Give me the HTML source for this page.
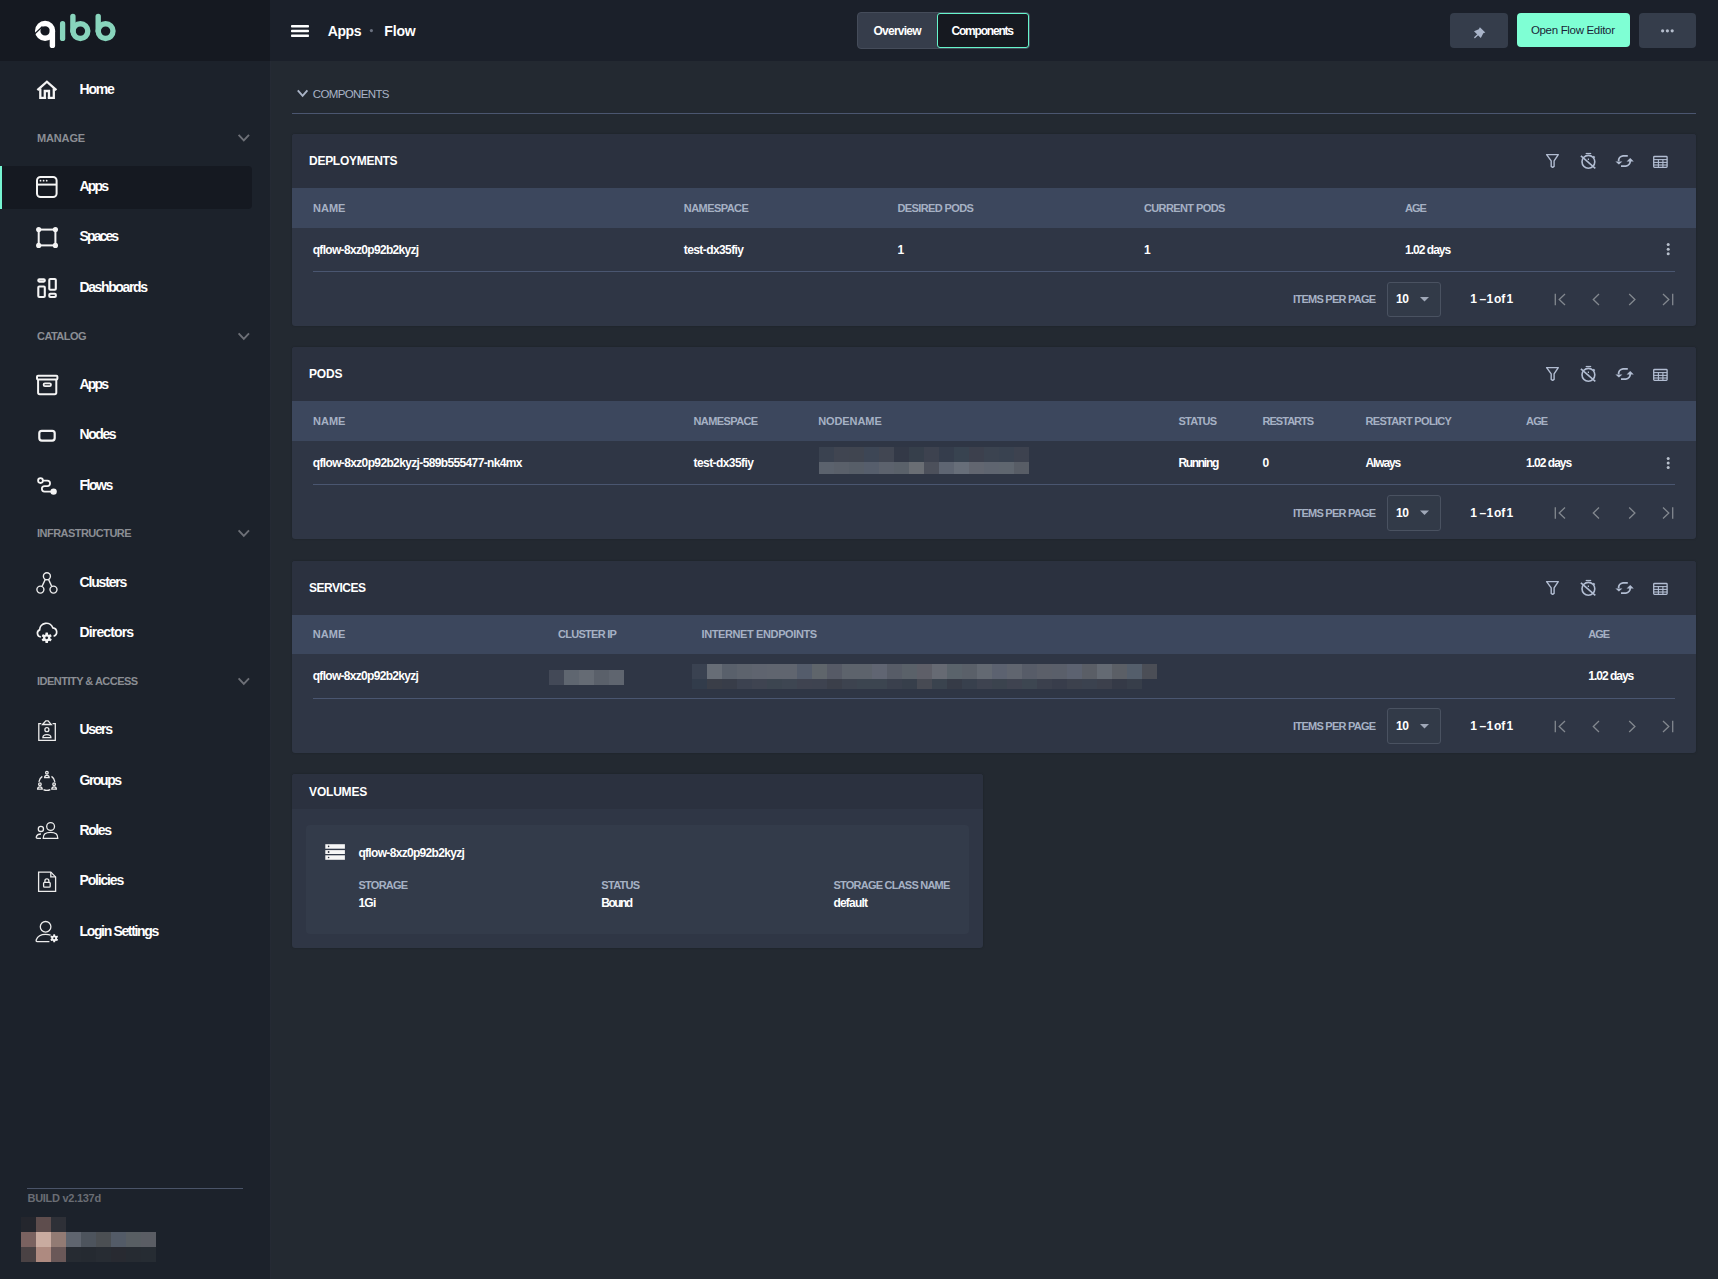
<!DOCTYPE html>
<html><head><meta charset="utf-8">
<style>
html,body{margin:0;padding:0;}
body{width:1718px;height:1279px;overflow:hidden;position:relative;background:#232931;font-family:"Liberation Sans",sans-serif;}
.a{position:absolute;}
.t{position:absolute;white-space:nowrap;line-height:20px;font-family:"Liberation Sans",sans-serif;}
.b{position:absolute;}
svg{position:absolute;left:0;top:0;overflow:visible;}
.card{position:absolute;left:292px;width:1404px;background:#2f3645;border-radius:3px;overflow:hidden;box-shadow:0 0 2px rgba(0,0,0,0.25);}
.card .ttl{position:absolute;left:0;top:0;right:0;height:54px;background:#2b313f;}
.card .hdr{position:absolute;left:0;top:54px;right:0;height:40px;background:#3c475d;}
.card .div{position:absolute;left:21px;width:1362px;top:137px;height:1px;background:#4a5670;}
.sel{position:absolute;left:1387px;width:54px;height:35.5px;border:1px solid #4a5261;border-radius:3px;background:#323a48;box-sizing:border-box;}
</style></head><body>

<!-- sidebar -->
<div class="a" style="left:0;top:0;width:270px;height:1279px;background:#1c222b;"></div>
<div class="a" style="left:270px;top:61px;width:1px;height:1218px;background:#252a34;"></div>
<div class="a" style="left:0;top:0;width:270px;height:61px;background:#151921;"></div>
<!-- header -->
<div class="a" style="left:270px;top:0;width:1448px;height:61px;background:#1b202a;"></div>

<!-- active item -->
<div class="a" style="left:0;top:166px;width:252px;height:43px;background:#151921;border-radius:0 4px 4px 0;"></div>
<div class="a" style="left:0;top:166px;width:2px;height:43px;background:#76f5d2;"></div>

<!-- build line -->
<div class="a" style="left:27px;top:1188px;width:216px;height:1px;background:#4a5468;"></div>

<!-- tabs -->
<div class="a" style="left:857px;top:12px;width:173px;height:37px;background:#363d4b;border:1px solid #454c5a;border-radius:4px;box-sizing:border-box;"></div>
<div class="a" style="left:936.7px;top:13px;width:92.3px;height:35px;background:#161920;border:1.7px solid #66f5cc;border-radius:3px;box-sizing:border-box;"></div>

<!-- buttons -->
<div class="a" style="left:1450px;top:13px;width:58px;height:34.5px;background:#353d4b;border-radius:4px;"></div>
<div class="a" style="left:1517px;top:13px;width:113px;height:34px;background:#7fffd4;border-radius:4px;"></div>
<div class="a" style="left:1639px;top:13px;width:57px;height:34.5px;background:#353d4b;border-radius:4px;"></div>

<!-- components line -->
<div class="a" style="left:292px;top:113px;width:1404px;height:1px;background:#4b5670;"></div>

<!-- cards -->
<div class="card" style="top:134px;height:192px;"><div class="ttl"></div><div class="hdr"></div><div class="div"></div></div>
<div class="card" style="top:347px;height:192px;"><div class="ttl"></div><div class="hdr"></div><div class="div"></div></div>
<div class="card" style="top:561px;height:192px;"><div class="ttl"></div><div class="hdr" style="height:39px"></div><div class="div"></div></div>
<div class="card" style="top:774px;height:174px;width:691px;"><div class="ttl" style="height:35px;"></div>
  <div class="a" style="left:14px;top:51px;width:663px;height:109px;background:#333b4a;border-radius:4px;"></div>
</div>

<div class="sel" style="top:281.5px;"></div>
<div class="sel" style="top:495px;"></div>
<div class="sel" style="top:708px;"></div>
<div class="b" style="left:21px;top:1217px;width:15px;height:15px;background:#24262d"></div><div class="b" style="left:36px;top:1217px;width:15px;height:15px;background:#5e4d4d"></div><div class="b" style="left:51px;top:1217px;width:15px;height:15px;background:#2e3037"></div><div class="b" style="left:21px;top:1232px;width:15px;height:15px;background:#7a6260"></div><div class="b" style="left:36px;top:1232px;width:15px;height:15px;background:#c9aba0"></div><div class="b" style="left:51px;top:1232px;width:15px;height:15px;background:#927b74"></div><div class="b" style="left:66px;top:1232px;width:15px;height:15px;background:#5f656f"></div><div class="b" style="left:81px;top:1232px;width:15px;height:15px;background:#4d545d"></div><div class="b" style="left:96px;top:1232px;width:15px;height:15px;background:#4b4f53"></div><div class="b" style="left:111px;top:1232px;width:15px;height:15px;background:#535b67"></div><div class="b" style="left:126px;top:1232px;width:15px;height:15px;background:#585e63"></div><div class="b" style="left:141px;top:1232px;width:15px;height:15px;background:#5a5d64"></div><div class="b" style="left:21px;top:1247px;width:15px;height:15px;background:#4a4244"></div><div class="b" style="left:36px;top:1247px;width:15px;height:15px;background:#ae8a80"></div><div class="b" style="left:51px;top:1247px;width:15px;height:15px;background:#6a5858"></div><div class="b" style="left:66px;top:1247px;width:15px;height:15px;background:#262b32"></div><div class="b" style="left:81px;top:1247px;width:15px;height:15px;background:#252a31"></div><div class="b" style="left:96px;top:1247px;width:15px;height:15px;background:#272c33"></div><div class="b" style="left:111px;top:1247px;width:15px;height:15px;background:#282a31"></div><div class="b" style="left:126px;top:1247px;width:15px;height:15px;background:#262b32"></div><div class="b" style="left:141px;top:1247px;width:15px;height:15px;background:#262c33"></div>
<div class="b" style="left:819px;top:447px;width:15px;height:15px;background:#3a4250"></div><div class="b" style="left:834px;top:447px;width:15px;height:15px;background:#404551"></div><div class="b" style="left:849px;top:447px;width:15px;height:15px;background:#404550"></div><div class="b" style="left:864px;top:447px;width:15px;height:15px;background:#3d4655"></div><div class="b" style="left:879px;top:447px;width:15px;height:15px;background:#414652"></div><div class="b" style="left:894px;top:447px;width:15px;height:15px;background:#333947"></div><div class="b" style="left:909px;top:447px;width:15px;height:15px;background:#363f4b"></div><div class="b" style="left:924px;top:447px;width:15px;height:15px;background:#3d424f"></div><div class="b" style="left:939px;top:447px;width:15px;height:15px;background:#353d4c"></div><div class="b" style="left:954px;top:447px;width:15px;height:15px;background:#384350"></div><div class="b" style="left:969px;top:447px;width:15px;height:15px;background:#3c404d"></div><div class="b" style="left:984px;top:447px;width:15px;height:15px;background:#3b4350"></div><div class="b" style="left:999px;top:447px;width:15px;height:15px;background:#394250"></div><div class="b" style="left:1014px;top:447px;width:15px;height:15px;background:#3d424f"></div><div class="b" style="left:819px;top:462px;width:15px;height:12px;background:#5b626d"></div><div class="b" style="left:834px;top:462px;width:15px;height:12px;background:#5a606a"></div><div class="b" style="left:849px;top:462px;width:15px;height:12px;background:#575e68"></div><div class="b" style="left:864px;top:462px;width:15px;height:12px;background:#565e6c"></div><div class="b" style="left:879px;top:462px;width:15px;height:12px;background:#5c626d"></div><div class="b" style="left:894px;top:462px;width:15px;height:12px;background:#5a616a"></div><div class="b" style="left:909px;top:462px;width:15px;height:12px;background:#6a6e74"></div><div class="b" style="left:924px;top:462px;width:15px;height:12px;background:#4c505b"></div><div class="b" style="left:939px;top:462px;width:15px;height:12px;background:#5e6572"></div><div class="b" style="left:954px;top:462px;width:15px;height:12px;background:#676e79"></div><div class="b" style="left:969px;top:462px;width:15px;height:12px;background:#626670"></div><div class="b" style="left:984px;top:462px;width:15px;height:12px;background:#5f6570"></div><div class="b" style="left:999px;top:462px;width:15px;height:12px;background:#5f666f"></div><div class="b" style="left:1014px;top:462px;width:15px;height:12px;background:#585d66"></div>
<div class="b" style="left:549px;top:670px;width:15px;height:15px;background:#434957"></div><div class="b" style="left:564px;top:670px;width:15px;height:15px;background:#5f6670"></div><div class="b" style="left:579px;top:670px;width:15px;height:15px;background:#656b74"></div><div class="b" style="left:594px;top:670px;width:15px;height:15px;background:#5a606a"></div><div class="b" style="left:609px;top:670px;width:15px;height:15px;background:#5f656f"></div>
<div class="b" style="left:692px;top:664px;width:15px;height:15px;background:#3a4251"></div><div class="b" style="left:707px;top:664px;width:15px;height:15px;background:#676d76"></div><div class="b" style="left:722px;top:664px;width:15px;height:15px;background:#59606b"></div><div class="b" style="left:737px;top:664px;width:15px;height:15px;background:#5d636d"></div><div class="b" style="left:752px;top:664px;width:15px;height:15px;background:#5f646f"></div><div class="b" style="left:767px;top:664px;width:15px;height:15px;background:#60656f"></div><div class="b" style="left:782px;top:664px;width:15px;height:15px;background:#60656f"></div><div class="b" style="left:797px;top:664px;width:15px;height:15px;background:#545c6b"></div><div class="b" style="left:812px;top:664px;width:15px;height:15px;background:#5f656b"></div><div class="b" style="left:827px;top:664px;width:15px;height:15px;background:#565a66"></div><div class="b" style="left:842px;top:664px;width:15px;height:15px;background:#5d636c"></div><div class="b" style="left:857px;top:664px;width:15px;height:15px;background:#5d636c"></div><div class="b" style="left:872px;top:664px;width:15px;height:15px;background:#606572"></div><div class="b" style="left:887px;top:664px;width:15px;height:15px;background:#575c67"></div><div class="b" style="left:902px;top:664px;width:15px;height:15px;background:#5a6169"></div><div class="b" style="left:917px;top:664px;width:15px;height:15px;background:#5e5f68"></div><div class="b" style="left:932px;top:664px;width:15px;height:15px;background:#666a73"></div><div class="b" style="left:947px;top:664px;width:15px;height:15px;background:#5a636b"></div><div class="b" style="left:962px;top:664px;width:15px;height:15px;background:#5a6069"></div><div class="b" style="left:977px;top:664px;width:15px;height:15px;background:#636972"></div><div class="b" style="left:992px;top:664px;width:15px;height:15px;background:#5c6270"></div><div class="b" style="left:1007px;top:664px;width:15px;height:15px;background:#60656f"></div><div class="b" style="left:1022px;top:664px;width:15px;height:15px;background:#575c68"></div><div class="b" style="left:1037px;top:664px;width:15px;height:15px;background:#5b5f69"></div><div class="b" style="left:1052px;top:664px;width:15px;height:15px;background:#5a5f6a"></div><div class="b" style="left:1067px;top:664px;width:15px;height:15px;background:#5c6270"></div><div class="b" style="left:1082px;top:664px;width:15px;height:15px;background:#5a5e66"></div><div class="b" style="left:1097px;top:664px;width:15px;height:15px;background:#646a73"></div><div class="b" style="left:1112px;top:664px;width:15px;height:15px;background:#5b5f66"></div><div class="b" style="left:1127px;top:664px;width:15px;height:15px;background:#545e6b"></div><div class="b" style="left:1142px;top:664px;width:15px;height:15px;background:#4b4e56"></div><div class="b" style="left:692px;top:679px;width:15px;height:10px;background:#323c4b"></div><div class="b" style="left:707px;top:679px;width:15px;height:10px;background:#3a3e48"></div><div class="b" style="left:722px;top:679px;width:15px;height:10px;background:#383d49"></div><div class="b" style="left:737px;top:679px;width:15px;height:10px;background:#3c4250"></div><div class="b" style="left:752px;top:679px;width:15px;height:10px;background:#3f4451"></div><div class="b" style="left:767px;top:679px;width:15px;height:10px;background:#3c4550"></div><div class="b" style="left:782px;top:679px;width:15px;height:10px;background:#3e4652"></div><div class="b" style="left:797px;top:679px;width:15px;height:10px;background:#3f4350"></div><div class="b" style="left:812px;top:679px;width:15px;height:10px;background:#3e4350"></div><div class="b" style="left:827px;top:679px;width:15px;height:10px;background:#3b3f4a"></div><div class="b" style="left:842px;top:679px;width:15px;height:10px;background:#3d434f"></div><div class="b" style="left:857px;top:679px;width:15px;height:10px;background:#3c4550"></div><div class="b" style="left:872px;top:679px;width:15px;height:10px;background:#3c4550"></div><div class="b" style="left:887px;top:679px;width:15px;height:10px;background:#3a404d"></div><div class="b" style="left:902px;top:679px;width:15px;height:10px;background:#373f4b"></div><div class="b" style="left:917px;top:679px;width:15px;height:10px;background:#474a53"></div><div class="b" style="left:932px;top:679px;width:15px;height:10px;background:#3a434e"></div><div class="b" style="left:947px;top:679px;width:15px;height:10px;background:#363b47"></div><div class="b" style="left:962px;top:679px;width:15px;height:10px;background:#38404d"></div><div class="b" style="left:977px;top:679px;width:15px;height:10px;background:#3e4350"></div><div class="b" style="left:992px;top:679px;width:15px;height:10px;background:#3b434e"></div><div class="b" style="left:1007px;top:679px;width:15px;height:10px;background:#3f4350"></div><div class="b" style="left:1022px;top:679px;width:15px;height:10px;background:#3d4651"></div><div class="b" style="left:1037px;top:679px;width:15px;height:10px;background:#3b404d"></div><div class="b" style="left:1052px;top:679px;width:15px;height:10px;background:#383d4b"></div><div class="b" style="left:1067px;top:679px;width:15px;height:10px;background:#3c414d"></div><div class="b" style="left:1082px;top:679px;width:15px;height:10px;background:#3b424f"></div><div class="b" style="left:1097px;top:679px;width:15px;height:10px;background:#3c404c"></div><div class="b" style="left:1112px;top:679px;width:15px;height:10px;background:#353a47"></div><div class="b" style="left:1127px;top:679px;width:15px;height:10px;background:#373e4a"></div>

<svg width="1718" height="1279" viewBox="0 0 1718 1279">
<!-- logo -->
<g fill="none" stroke-linecap="round">
  <circle cx="45.1" cy="30.9" r="7.4" stroke="#ffffff" stroke-width="5.4"/>
  <line x1="52.4" y1="31" x2="52.4" y2="45.4" stroke="#ffffff" stroke-width="5.4"/>
  <line x1="34.3" y1="34.2" x2="42.5" y2="26.5" stroke="#151921" stroke-width="1.2" stroke-linecap="butt"/>
  <line x1="62.6" y1="23.7" x2="62.6" y2="38.4" stroke="#88d4bc" stroke-width="5.3"/>
  <line x1="72.9" y1="16.4" x2="72.9" y2="31" stroke="#88d4bc" stroke-width="5.4"/>
  <circle cx="80.4" cy="31.1" r="7.4" stroke="#88d4bc" stroke-width="5.4"/>
  <line x1="98.2" y1="16.4" x2="98.2" y2="31" stroke="#88d4bc" stroke-width="5.4"/>
  <circle cx="105.6" cy="31.1" r="7.4" stroke="#88d4bc" stroke-width="5.4"/>
</g>

<!-- hamburger -->
<g fill="#ffffff">
  <rect x="291" y="25" width="18" height="2.6" rx="0.8"/>
  <rect x="291" y="29.7" width="18" height="2.6" rx="0.8"/>
  <rect x="291" y="34.4" width="18" height="2.6" rx="0.8"/>
</g>
<circle cx="371.4" cy="30.6" r="1.6" fill="#6b7180"/>

<!-- pin -->
<g fill="#a9b4c9">
  <polygon points="1479.9,27.2 1485.3,32.5 1483.3,33.2 1480.8,38 1474,31.3 1478.8,29.2"/>
  <line x1="1474.8" y1="37.6" x2="1478" y2="34.4" stroke="#a9b4c9" stroke-width="1.4" stroke-linecap="round"/>
</g>
<!-- more dots -->
<g fill="#b5bdcc">
  <circle cx="1662.6" cy="30.8" r="1.6"/><circle cx="1667.4" cy="30.8" r="1.6"/><circle cx="1672.2" cy="30.8" r="1.6"/>
</g>

<!-- components chevron -->
<polyline points="297.8,90.3 302.6,95.8 307.4,90.3" fill="none" stroke="#a9b3c6" stroke-width="1.9"/>

<!-- sidebar chevrons -->
<g fill="none" stroke="#6d7077" stroke-width="1.9">
  <polyline points="238.6,134.9 243.8,140.4 249,134.9"/>
  <polyline points="238.6,333.4 243.8,338.9 249,333.4"/>
  <polyline points="238.6,530.4 243.8,535.9 249,530.4"/>
  <polyline points="238.6,678.4 243.8,683.9 249,678.4"/>
</g>

<!-- sidebar icons -->
<g fill="none" stroke="#f4f4f4" stroke-width="2.3" stroke-linejoin="miter">
  <!-- home -->
  <polyline points="37.4,90.2 46.9,81.7 56.4,90.2"/>
  <polyline points="40.3,88.6 40.3,97.9 46.1,97.9"/>
  <polyline points="53.8,88.6 53.8,97.9 47.8,97.9"/>
  <polyline points="44.8,97.9 44.8,91 49,91 49,97.9"/>
</g>
<g fill="none" stroke="#f4f4f4" stroke-width="2">
  <!-- apps -->
  <rect x="37" y="177" width="19.6" height="20" rx="3.5"/>
  <line x1="37" y1="184.6" x2="56.6" y2="184.6"/>
</g>
<g fill="#f4f4f4"><circle cx="40.5" cy="180.7" r="0.9"/><circle cx="43.6" cy="180.7" r="0.9"/><circle cx="46.7" cy="180.7" r="0.9"/></g>
<!-- spaces -->
<g fill="none" stroke="#f4f4f4" stroke-width="2"><rect x="38.7" y="229.6" width="16.7" height="15.8"/></g>
<g fill="#f4f4f4"><circle cx="38.7" cy="229.6" r="2.6"/><circle cx="55.4" cy="229.6" r="2.6"/><circle cx="38.7" cy="245.4" r="2.6"/><circle cx="55.4" cy="245.4" r="2.6"/></g>
<!-- dashboards -->
<g fill="none" stroke="#f4f4f4" stroke-width="2.1">
  <rect x="38.3" y="279.3" width="6.5" height="2.3" rx="1"/>
  <rect x="38.3" y="286.5" width="6.5" height="10.5" rx="1"/>
  <rect x="49.3" y="279" width="6.5" height="10.8" rx="1"/>
  <rect x="49.3" y="293.7" width="6.5" height="3.3" rx="1"/>
</g>
<!-- catalog apps (archive) -->
<g fill="none" stroke="#f4f4f4" stroke-width="2">
  <rect x="37" y="375.8" width="20.4" height="3.8" rx="1"/>
  <path d="M38.1 379.6 V392.6 a1.6 1.6 0 0 0 1.6 1.6 H54.7 a1.6 1.6 0 0 0 1.6 -1.6 V379.6"/>
  <rect x="43.6" y="383.4" width="7.4" height="2.8" rx="1.4" stroke-width="1.8"/>
</g>
<!-- nodes -->
<rect x="39.3" y="430.8" width="15.4" height="9.8" rx="2.5" fill="none" stroke="#f4f4f4" stroke-width="2.2"/>
<!-- flows -->
<g fill="none" stroke="#f4f4f4" stroke-width="1.8">
  <circle cx="40.5" cy="480.6" r="2.4"/>
  <path d="M43 480.6 H47.3 A2.75 2.75 0 0 1 47.3 486.1 H44.6 A2.75 2.75 0 0 0 44.6 491.6 H51"/>
</g>
<circle cx="53.6" cy="491.6" r="3.2" fill="#f4f4f4"/>
<!-- clusters -->
<g fill="none" stroke="#ececec" stroke-width="1.4">
  <circle cx="46.9" cy="576.2" r="3.5"/>
  <circle cx="40.4" cy="589.6" r="3.5"/>
  <circle cx="53.5" cy="589.6" r="3.5"/>
  <line x1="45.3" y1="579.4" x2="42.1" y2="586.3"/>
  <line x1="48.5" y1="579.4" x2="51.7" y2="586.3"/>
</g>
<!-- directors -->
<g fill="none" stroke="#f4f4f4" stroke-width="1.7">
  <path d="M40.8 636.8 A3.6 3.6 0 0 1 39.6 629.9 A6.8 6.8 0 0 1 52.8 627.8 A4.3 4.3 0 0 1 53.6 636.2"/>
</g>
<g fill="#f4f4f4">
  <circle cx="46.7" cy="637.8" r="3.6"/>
  <rect x="45.4" y="632.6" width="2.6" height="10.4" rx="0.5"/>
  <rect x="45.4" y="632.6" width="2.6" height="10.4" rx="0.5" transform="rotate(60 46.7 637.8)"/>
  <rect x="45.4" y="632.6" width="2.6" height="10.4" rx="0.5" transform="rotate(-60 46.7 637.8)"/>
</g>
<circle cx="46.7" cy="637.8" r="1.4" fill="#1c222b"/>
<!-- users -->
<g fill="none" stroke="#ececec" stroke-width="1.3">
  <path d="M41.3 723.6 H38.8 V740.3 H55.3 V723.6 H52.6"/>
  <path d="M42.6 724.5 L45.8 720.8 H48.1 L51.3 724.5 Z"/>
  <circle cx="46.9" cy="729.7" r="2"/>
  <path d="M42.9 737.6 Q42.9 734.6 46.9 734.6 Q50.9 734.6 50.9 737.6 Z"/>
</g>
<!-- groups -->
<g fill="none" stroke="#ececec" stroke-width="1.3">
  <path d="M42.3 776.4 A7.8 7.8 0 0 0 38.9 781.9" />
  <path d="M51.5 776.4 A7.8 7.8 0 0 1 54.9 781.9" />
  <path d="M43.5 789.6 A7.8 7.8 0 0 0 50.3 789.6" />
  <circle cx="46.9" cy="772.7" r="1.3"/>
  <path d="M44.6 777.7 Q44.6 775.3 46.9 775.3 Q49.2 775.3 49.2 777.7 Z"/>
  <circle cx="39.9" cy="784.2" r="1.3"/>
  <path d="M37.6 789.2 Q37.6 786.8 39.9 786.8 Q42.2 786.8 42.2 789.2 Z"/>
  <circle cx="54.1" cy="784.2" r="1.3"/>
  <path d="M51.8 789.2 Q51.8 786.8 54.1 786.8 Q56.4 786.8 56.4 789.2 Z"/>
</g>
<!-- roles -->
<g fill="none" stroke="#ececec" stroke-width="1.3">
  <circle cx="50.6" cy="826.5" r="3.9"/>
  <circle cx="40.9" cy="828.9" r="2.6"/>
  <path d="M43.2 838.4 Q43 832.3 50.6 832.3 Q58 832.3 57.8 838.4 Z"/>
  <path d="M41 838.4 H37.6 Q35.8 838.4 36.4 836.6 Q37.4 833.9 41 834"/>
</g>
<!-- policies -->
<g fill="none" stroke="#ececec" stroke-width="1.3">
  <path d="M38.6 872.1 H50.8 L55.6 876.9 V891.3 H38.6 Z"/>
  <path d="M50.8 872.1 V876.9 H55.6"/>
  <rect x="43.6" y="882.3" width="6.6" height="4.9" rx="1"/>
  <path d="M44.9 882.3 V880.9 A2 2 0 0 1 48.9 880.9 V882.3"/>
</g>
<!-- login settings -->
<g fill="none" stroke="#ececec" stroke-width="1.3">
  <circle cx="45.6" cy="926.8" r="5.3"/>
  <path d="M49.4 941.6 H37.2 Q35.7 941.6 36.3 939.8 Q38.3 934.4 45.6 934.4 Q48.6 934.4 50.6 935.1"/>
</g>
<g fill="#f4f4f4">
  <circle cx="54.2" cy="938.3" r="2.8"/>
  <rect x="53.2" y="934.3" width="2" height="8" rx="0.4"/>
  <rect x="53.2" y="934.3" width="2" height="8" rx="0.4" transform="rotate(60 54.2 938.3)"/>
  <rect x="53.2" y="934.3" width="2" height="8" rx="0.4" transform="rotate(-60 54.2 938.3)"/>
</g>
<circle cx="54.2" cy="938.3" r="1" fill="#1c222b"/>

<!-- card icons -->
<g id="cicons" fill="none" stroke="#b2bdd2" stroke-width="1.4">
  <path d="M1546.6 154.6 H1558.3 L1554.1 160.9 V166.4 L1552.65 167.4 L1551.2 166.4 V160.9 Z" stroke-linejoin="round"/>
  <circle cx="1588.4" cy="161.8" r="6.4" stroke-width="1.6"/>
  <line x1="1585.7" y1="153.5" x2="1591.2" y2="153.5" stroke-width="1.2"/>
  <line x1="1580.9" y1="155.9" x2="1595.3" y2="168.4" stroke-width="1.6"/>
  <line x1="1593.2" y1="156.2" x2="1594.8" y2="157.6" stroke-width="1.4"/>
  <line x1="1588.4" y1="158.6" x2="1588.4" y2="160" stroke-width="1.2"/>
  <path d="M1627.8 155.8 H1623 A5 5 0 0 0 1618.6 161.2" stroke-width="1.8"/>
  <polygon points="1615.4,161.5 1622.4,161.5 1618.9,164.6" fill="#b2bdd2" stroke="none"/>
  <path d="M1621 166.1 H1625.8 A5 5 0 0 0 1630.2 160.7" stroke-width="1.8"/>
  <polygon points="1626.6,161.5 1633.8,161.5 1630.2,157.9" fill="#b2bdd2" stroke="none"/>
  <rect x="1653.7" y="156.5" width="13.4" height="10.8" rx="0.8" stroke-width="1.3"/>
  <line x1="1653.7" y1="159.6" x2="1667.1" y2="159.6" stroke-width="1.1"/>
  <line x1="1653.7" y1="162.4" x2="1667.1" y2="162.4" stroke-width="1.1"/>
  <line x1="1653.7" y1="165" x2="1667.1" y2="165" stroke-width="1.1"/>
  <line x1="1658.4" y1="159.6" x2="1658.4" y2="167.3" stroke-width="1.1"/>
  <line x1="1662.9" y1="159.6" x2="1662.9" y2="167.3" stroke-width="1.1"/>
</g>
<use href="#cicons" transform="translate(0 213)"/>
<use href="#cicons" transform="translate(0 427)"/>

<!-- kebab + pagination -->
<g id="keb" fill="#b8c0cc"><circle cx="1668.2" cy="244.6" r="1.5"/><circle cx="1668.2" cy="249.2" r="1.5"/><circle cx="1668.2" cy="253.8" r="1.5"/></g>
<use href="#keb" transform="translate(0 213.8)"/>
<g id="pag">
  <polygon points="1420,297 1429,297 1424.5,301.5" fill="#a0a8b8"/>
  <g fill="none" stroke="#83888f" stroke-width="1.3">
    <line x1="1555.3" y1="293.8" x2="1555.3" y2="305.2"/>
    <polyline points="1565,294 1559.2,299.5 1565,305"/>
    <polyline points="1599,294 1593.3,299.5 1599,305"/>
    <polyline points="1629.2,294 1634.9,299.5 1629.2,305"/>
    <polyline points="1663,294 1668.8,299.5 1663,305"/>
    <line x1="1672.7" y1="293.8" x2="1672.7" y2="305.2"/>
  </g>
</g>
<use href="#pag" transform="translate(0 213.5)"/>
<use href="#pag" transform="translate(0 427)"/>
<!-- storage icon -->
<g fill="#f6f6f6">
  <rect x="325.3" y="844.2" width="19.6" height="4.5"/>
  <rect x="325.3" y="850.1" width="19.6" height="3.9"/>
  <rect x="325.3" y="855.3" width="19.6" height="4.5"/>
</g>
<g fill="#2b303c"><circle cx="328.6" cy="846.4" r="0.8"/><circle cx="328.6" cy="852" r="0.9"/><circle cx="328.6" cy="857.5" r="0.8"/></g>
</svg>

<div class="t" style="left:79.5px;top:79px;font-size:14px;font-weight:700;color:#ffffff;letter-spacing:-1.222px;">Home</div>
<div class="t" style="left:79.5px;top:176px;font-size:14px;font-weight:700;color:#ffffff;letter-spacing:-1.820px;">Apps</div>
<div class="t" style="left:79.5px;top:226px;font-size:14px;font-weight:700;color:#ffffff;letter-spacing:-1.881px;">Spaces</div>
<div class="t" style="left:79.5px;top:277px;font-size:14px;font-weight:700;color:#ffffff;letter-spacing:-1.387px;">Dashboards</div>
<div class="t" style="left:79.5px;top:374px;font-size:14px;font-weight:700;color:#ffffff;letter-spacing:-1.820px;">Apps</div>
<div class="t" style="left:79.5px;top:424px;font-size:14px;font-weight:700;color:#ffffff;letter-spacing:-1.439px;">Nodes</div>
<div class="t" style="left:79.5px;top:475px;font-size:14px;font-weight:700;color:#ffffff;letter-spacing:-1.458px;">Flows</div>
<div class="t" style="left:79.5px;top:572px;font-size:14px;font-weight:700;color:#ffffff;letter-spacing:-1.170px;">Clusters</div>
<div class="t" style="left:79.5px;top:622px;font-size:14px;font-weight:700;color:#ffffff;letter-spacing:-0.854px;">Directors</div>
<div class="t" style="left:79.5px;top:719px;font-size:14px;font-weight:700;color:#ffffff;letter-spacing:-1.370px;">Users</div>
<div class="t" style="left:79.5px;top:770px;font-size:14px;font-weight:700;color:#ffffff;letter-spacing:-1.428px;">Groups</div>
<div class="t" style="left:79.5px;top:820px;font-size:14px;font-weight:700;color:#ffffff;letter-spacing:-1.421px;">Roles</div>
<div class="t" style="left:79.5px;top:870px;font-size:14px;font-weight:700;color:#ffffff;letter-spacing:-1.169px;">Policies</div>
<div class="t" style="left:79.5px;top:921px;font-size:14px;font-weight:700;color:#ffffff;letter-spacing:-1.345px;">Login Settings</div>
<div class="t" style="left:37.0px;top:128px;font-size:11px;font-weight:700;color:#8b8e94;letter-spacing:-0.146px;">MANAGE</div>
<div class="t" style="left:37.0px;top:326px;font-size:11px;font-weight:700;color:#8b8e94;letter-spacing:-0.548px;">CATALOG</div>
<div class="t" style="left:37.0px;top:523px;font-size:11px;font-weight:700;color:#8b8e94;letter-spacing:-0.530px;">INFRASTRUCTURE</div>
<div class="t" style="left:37.0px;top:671px;font-size:11px;font-weight:700;color:#8b8e94;letter-spacing:-0.515px;">IDENTITY &amp; ACCESS</div>
<div class="t" style="left:27.5px;top:1188px;font-size:11px;font-weight:700;color:#6a6d74;letter-spacing:-0.281px;">BUILD v2.137d</div>
<div class="t" style="left:327.7px;top:21px;font-size:14px;font-weight:700;color:#ffffff;letter-spacing:-0.387px;">Apps</div>
<div class="t" style="left:384.3px;top:21px;font-size:14px;font-weight:700;color:#ffffff;letter-spacing:-0.150px;">Flow</div>
<div class="t" style="left:873.5px;top:21px;font-size:12px;font-weight:700;color:#ffffff;letter-spacing:-0.765px;">Overview</div>
<div class="t" style="left:951.5px;top:21px;font-size:12px;font-weight:700;color:#ffffff;letter-spacing:-1.203px;">Components</div>
<div class="t" style="left:1530.9px;top:20px;font-size:11.5px;font-weight:400;color:#1a1f38;letter-spacing:-0.318px;">Open Flow Editor</div>
<div class="t" style="left:312.8px;top:84px;font-size:11.5px;font-weight:400;color:#a9b3c6;letter-spacing:-0.637px;">COMPONENTS</div>
<div class="t" style="left:309.0px;top:151px;font-size:12px;font-weight:700;color:#ffffff;letter-spacing:-0.272px;">DEPLOYMENTS</div>
<div class="t" style="left:313.0px;top:198px;font-size:11px;font-weight:700;color:#a6b1c4;letter-spacing:0.023px;">NAME</div>
<div class="t" style="left:683.8px;top:198px;font-size:11px;font-weight:700;color:#a6b1c4;letter-spacing:-0.566px;">NAMESPACE</div>
<div class="t" style="left:897.5px;top:198px;font-size:11px;font-weight:700;color:#a6b1c4;letter-spacing:-0.616px;">DESIRED PODS</div>
<div class="t" style="left:1143.9px;top:198px;font-size:11px;font-weight:700;color:#a6b1c4;letter-spacing:-0.596px;">CURRENT PODS</div>
<div class="t" style="left:1405.1px;top:198px;font-size:11px;font-weight:700;color:#a6b1c4;letter-spacing:-1.092px;">AGE</div>
<div class="t" style="left:312.7px;top:240px;font-size:12px;font-weight:700;color:#ffffff;letter-spacing:-0.678px;">qflow-8xz0p92b2kyzj</div>
<div class="t" style="left:683.8px;top:240px;font-size:12px;font-weight:700;color:#ffffff;letter-spacing:-0.589px;">test-dx35fiy</div>
<div class="t" style="left:897.5px;top:240px;font-size:12px;font-weight:700;color:#ffffff;">1</div>
<div class="t" style="left:1143.9px;top:240px;font-size:12px;font-weight:700;color:#ffffff;">1</div>
<div class="t" style="left:1405.1px;top:240px;font-size:12px;font-weight:700;color:#ffffff;letter-spacing:-0.991px;">1.02 days</div>
<div class="t" style="left:1293.1px;top:289px;font-size:11px;font-weight:700;color:#a6b1c4;letter-spacing:-0.742px;">ITEMS PER PAGE</div>
<div class="t" style="left:1396.0px;top:289px;font-size:12px;font-weight:700;color:#ffffff;letter-spacing:-0.539px;">10</div>
<div class="t" style="left:1470.3px;top:289px;font-size:12px;font-weight:700;color:#ffffff;">1</div>
<div class="t" style="left:1479.4px;top:289px;font-size:12px;font-weight:700;color:#ffffff;">–</div>
<div class="t" style="left:1486.4px;top:289px;font-size:12px;font-weight:700;color:#ffffff;">1</div>
<div class="t" style="left:1494.1px;top:289px;font-size:12px;font-weight:700;color:#ffffff;letter-spacing:-0.208px;">of</div>
<div class="t" style="left:1506.5px;top:289px;font-size:12px;font-weight:700;color:#ffffff;">1</div>
<div class="t" style="left:309.0px;top:364px;font-size:12px;font-weight:700;color:#ffffff;letter-spacing:-0.199px;">PODS</div>
<div class="t" style="left:312.9px;top:411px;font-size:11px;font-weight:700;color:#a6b1c4;letter-spacing:0.056px;">NAME</div>
<div class="t" style="left:693.5px;top:411px;font-size:11px;font-weight:700;color:#a6b1c4;letter-spacing:-0.603px;">NAMESPACE</div>
<div class="t" style="left:818.2px;top:411px;font-size:11px;font-weight:700;color:#a6b1c4;letter-spacing:-0.087px;">NODENAME</div>
<div class="t" style="left:1178.5px;top:411px;font-size:11px;font-weight:700;color:#a6b1c4;letter-spacing:-0.743px;">STATUS</div>
<div class="t" style="left:1262.5px;top:411px;font-size:11px;font-weight:700;color:#a6b1c4;letter-spacing:-0.973px;">RESTARTS</div>
<div class="t" style="left:1365.5px;top:411px;font-size:11px;font-weight:700;color:#a6b1c4;letter-spacing:-0.668px;">RESTART POLICY</div>
<div class="t" style="left:1526.1px;top:411px;font-size:11px;font-weight:700;color:#a6b1c4;letter-spacing:-0.892px;">AGE</div>
<div class="t" style="left:312.7px;top:453px;font-size:12px;font-weight:700;color:#ffffff;letter-spacing:-0.637px;">qflow-8xz0p92b2kyzj-589b555477-nk4mx</div>
<div class="t" style="left:693.5px;top:453px;font-size:12px;font-weight:700;color:#ffffff;letter-spacing:-0.571px;">test-dx35fiy</div>
<div class="t" style="left:1178.5px;top:453px;font-size:12px;font-weight:700;color:#ffffff;letter-spacing:-1.323px;">Running</div>
<div class="t" style="left:1262.5px;top:453px;font-size:12px;font-weight:700;color:#ffffff;">0</div>
<div class="t" style="left:1365.5px;top:453px;font-size:12px;font-weight:700;color:#ffffff;letter-spacing:-1.148px;">Always</div>
<div class="t" style="left:1526.1px;top:453px;font-size:12px;font-weight:700;color:#ffffff;letter-spacing:-0.991px;">1.02 days</div>
<div class="t" style="left:1293.1px;top:503px;font-size:11px;font-weight:700;color:#a6b1c4;letter-spacing:-0.742px;">ITEMS PER PAGE</div>
<div class="t" style="left:1396.0px;top:503px;font-size:12px;font-weight:700;color:#ffffff;letter-spacing:-0.539px;">10</div>
<div class="t" style="left:1470.3px;top:503px;font-size:12px;font-weight:700;color:#ffffff;">1</div>
<div class="t" style="left:1479.4px;top:503px;font-size:12px;font-weight:700;color:#ffffff;">–</div>
<div class="t" style="left:1486.4px;top:503px;font-size:12px;font-weight:700;color:#ffffff;">1</div>
<div class="t" style="left:1494.1px;top:503px;font-size:12px;font-weight:700;color:#ffffff;letter-spacing:-0.208px;">of</div>
<div class="t" style="left:1506.5px;top:503px;font-size:12px;font-weight:700;color:#ffffff;">1</div>
<div class="t" style="left:309.0px;top:578px;font-size:12px;font-weight:700;color:#ffffff;letter-spacing:-0.507px;">SERVICES</div>
<div class="t" style="left:312.8px;top:624px;font-size:11px;font-weight:700;color:#a6b1c4;letter-spacing:0.090px;">NAME</div>
<div class="t" style="left:558.0px;top:624px;font-size:11px;font-weight:700;color:#a6b1c4;letter-spacing:-0.716px;">CLUSTER IP</div>
<div class="t" style="left:701.5px;top:624px;font-size:11px;font-weight:700;color:#a6b1c4;letter-spacing:-0.387px;">INTERNET ENDPOINTS</div>
<div class="t" style="left:1588.3px;top:624px;font-size:11px;font-weight:700;color:#a6b1c4;letter-spacing:-0.992px;">AGE</div>
<div class="t" style="left:312.7px;top:666px;font-size:12px;font-weight:700;color:#ffffff;letter-spacing:-0.694px;">qflow-8xz0p92b2kyzj</div>
<div class="t" style="left:1588.3px;top:666px;font-size:12px;font-weight:700;color:#ffffff;letter-spacing:-1.016px;">1.02 days</div>
<div class="t" style="left:1293.1px;top:716px;font-size:11px;font-weight:700;color:#a6b1c4;letter-spacing:-0.742px;">ITEMS PER PAGE</div>
<div class="t" style="left:1396.0px;top:716px;font-size:12px;font-weight:700;color:#ffffff;letter-spacing:-0.539px;">10</div>
<div class="t" style="left:1470.3px;top:716px;font-size:12px;font-weight:700;color:#ffffff;">1</div>
<div class="t" style="left:1479.4px;top:716px;font-size:12px;font-weight:700;color:#ffffff;">–</div>
<div class="t" style="left:1486.4px;top:716px;font-size:12px;font-weight:700;color:#ffffff;">1</div>
<div class="t" style="left:1494.1px;top:716px;font-size:12px;font-weight:700;color:#ffffff;letter-spacing:-0.208px;">of</div>
<div class="t" style="left:1506.5px;top:716px;font-size:12px;font-weight:700;color:#ffffff;">1</div>
<div class="t" style="left:309.1px;top:782px;font-size:12px;font-weight:700;color:#ffffff;letter-spacing:-0.204px;">VOLUMES</div>
<div class="t" style="left:358.4px;top:843px;font-size:12px;font-weight:700;color:#ffffff;letter-spacing:-0.678px;">qflow-8xz0p92b2kyzj</div>
<div class="t" style="left:358.5px;top:875px;font-size:11px;font-weight:700;color:#a6b1c4;letter-spacing:-0.757px;">STORAGE</div>
<div class="t" style="left:601.3px;top:875px;font-size:11px;font-weight:700;color:#a6b1c4;letter-spacing:-0.703px;">STATUS</div>
<div class="t" style="left:833.5px;top:875px;font-size:11px;font-weight:700;color:#a6b1c4;letter-spacing:-0.772px;">STORAGE CLASS NAME</div>
<div class="t" style="left:358.5px;top:893px;font-size:12px;font-weight:700;color:#ffffff;letter-spacing:-0.812px;">1Gi</div>
<div class="t" style="left:601.3px;top:893px;font-size:12px;font-weight:700;color:#ffffff;letter-spacing:-1.520px;">Bound</div>
<div class="t" style="left:833.5px;top:893px;font-size:12px;font-weight:700;color:#ffffff;letter-spacing:-0.821px;">default</div>

</body></html>
